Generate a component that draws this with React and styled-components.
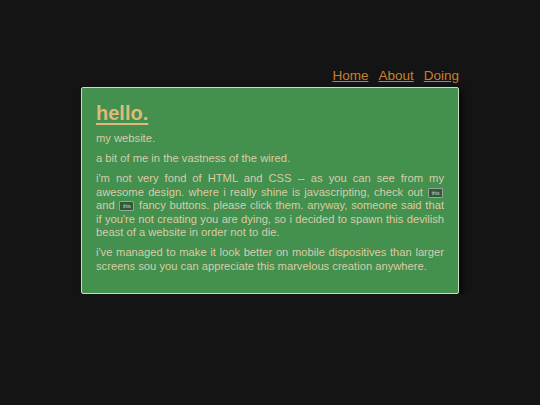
import styled, { createGlobalStyle } from "styled-components";

const Global = createGlobalStyle`
  html, body {
    margin: 0;
    padding: 0;
    background: #141414;
    font-family: "Liberation Sans", Arial, sans-serif;
  }
`;

const Page = styled.div`
  width: 378px;
  margin: 0 auto;
  padding-top: 66px;
`;

const Nav = styled.nav`
  display: flex;
  justify-content: flex-end;
  gap: 10px;
  height: 18px;
  align-items: center;
  margin-bottom: 3px;
`;

const NavLink = styled.a`
  color: #c8802c;
  font-size: 13.5px;
  text-decoration: underline;
  cursor: pointer;
`;

const Card = styled.main`
  background: #43904f;
  border: 1.5px solid #c6dcc4;
  border-radius: 2px;
  box-shadow: 4px 5px 6px rgba(0, 0, 0, 0.55);
  padding: 13px 14px 13px 14px;
  box-sizing: border-box;
`;

const Title = styled.h1`
  margin: 0 0 7px 0;
  font-size: 20px;
  line-height: 24px;
  color: #dfb979;
  text-decoration: underline;
  text-decoration-thickness: 2px;
  text-underline-offset: 3px;
`;

const Para = styled.p`
  margin: 0 0 6.5px 0;
  font-size: 11.2px;
  line-height: 13.5px;
  color: #dacca8;
  text-align: justify;
`;

const TinyButton = styled.button`
  display: inline-block;
  vertical-align: middle;
  font-family: "Liberation Sans", Arial, sans-serif;
  font-size: 5px;
  line-height: 6px;
  padding: 1px 2.5px;
  margin: 0 1px;
  background: #2e5a34;
  color: #d8d8d8;
  border: 1px solid #9aa39a;
  border-radius: 1px;
  cursor: pointer;
`;

export default function App() {
  return (
    <>
      <Global />
      <Page>
        <Nav>
          <NavLink>Home</NavLink>
          <NavLink>About</NavLink>
          <NavLink>Doing</NavLink>
        </Nav>
        <Card>
          <Title>hello.</Title>
          <Para>my website.</Para>
          <Para>a bit of me in the vastness of the wired.</Para>
          <Para>
            i'm not very fond of HTML and CSS -- as you can see from my awesome
            design. where i really shine is javascripting, check out{" "}
            <TinyButton>this</TinyButton> and <TinyButton>this</TinyButton>{" "}
            fancy buttons. please click them. anyway, someone said that if
            you're not creating you are dying, so i decided to spawn this
            devilish beast of a website in order not to die.
          </Para>
          <Para>
            i've managed to make it look better on mobile dispositives than
            larger screens sou you can appreciate this marvelous creation
            anywhere.
          </Para>
        </Card>
      </Page>
    </>
  );
}
